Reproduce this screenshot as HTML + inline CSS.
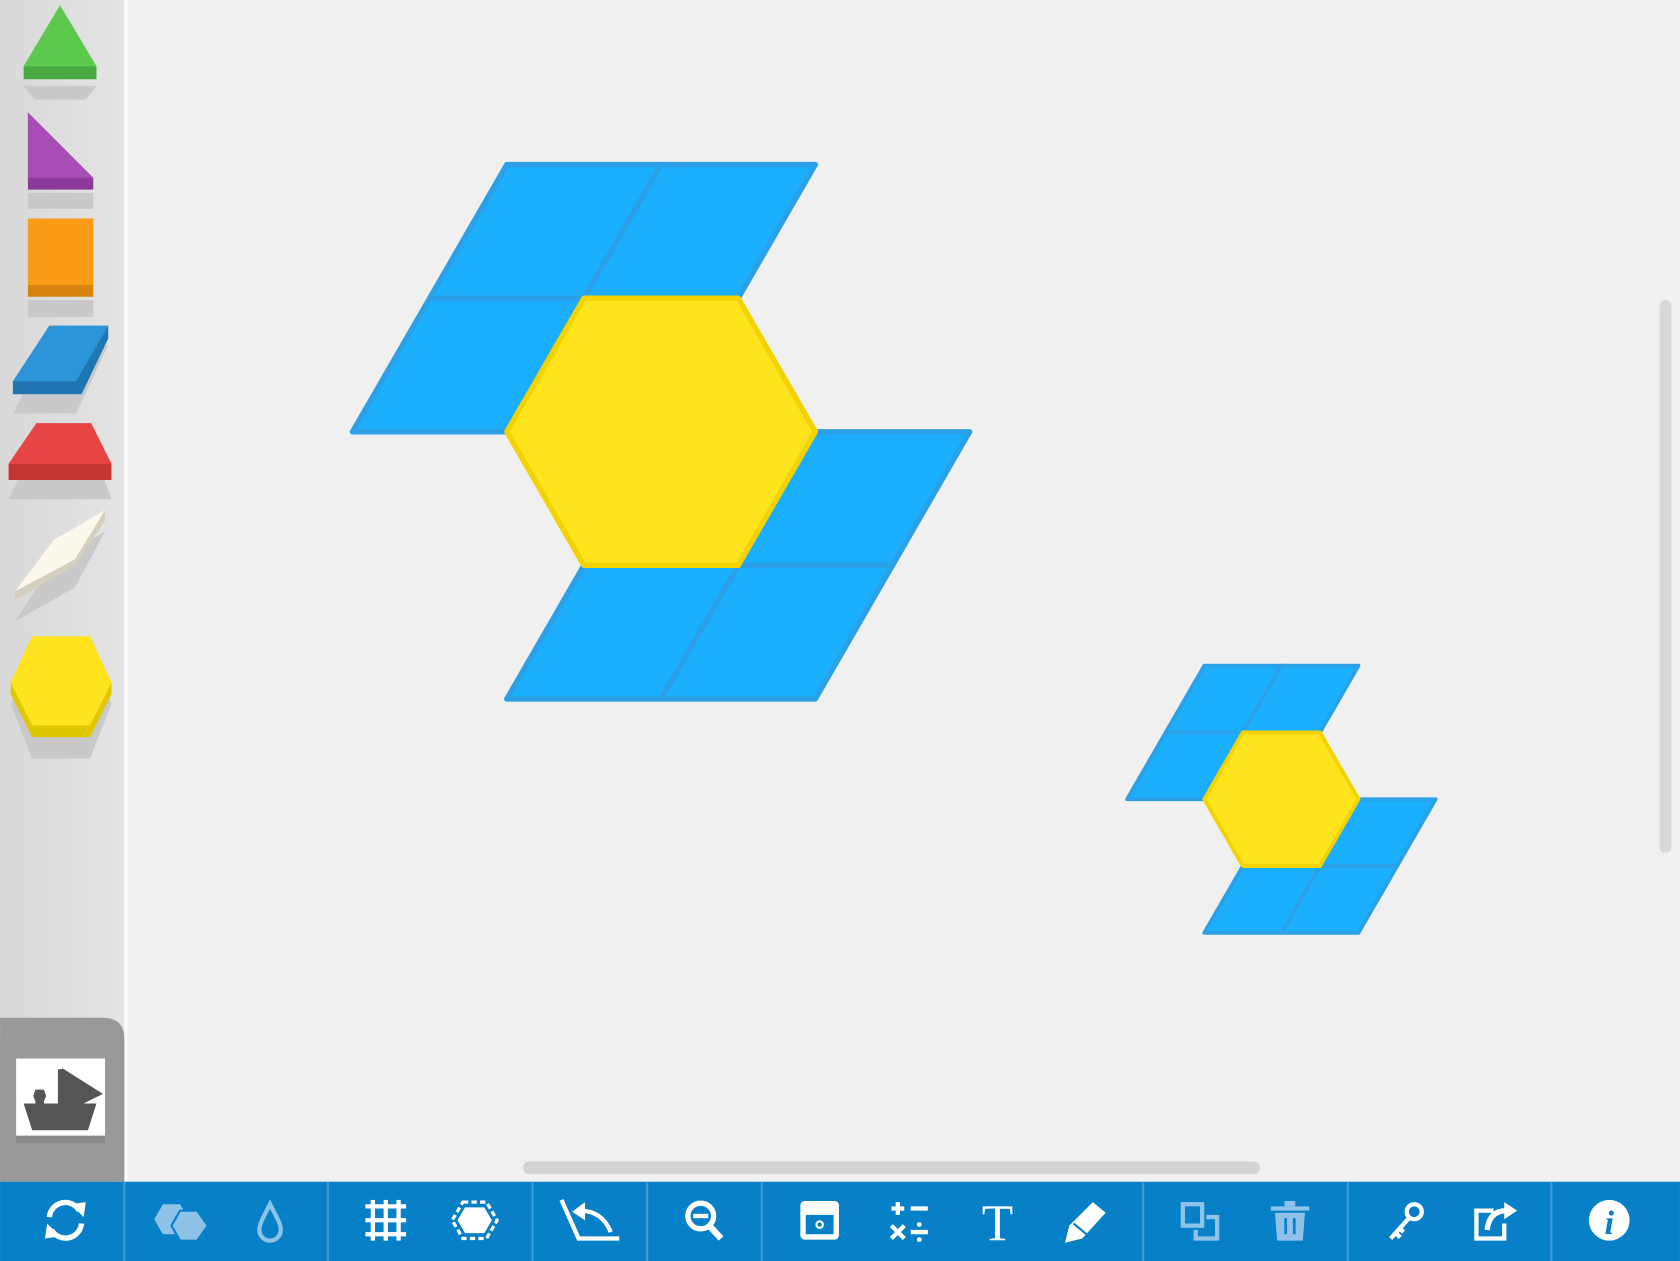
<!DOCTYPE html>
<html><head><meta charset="utf-8"><style>
html,body{margin:0;padding:0;background:#f0f0f0;overflow:hidden}
svg{display:block}
</style></head><body>
<svg width="1680" height="1261" viewBox="0 0 1568 1177" xmlns="http://www.w3.org/2000/svg">
<defs>
<linearGradient id="sb" x1="0" x2="1"><stop offset="0" stop-color="#d8d8d8"/><stop offset="1" stop-color="#e4e4e4"/></linearGradient>
</defs>
<rect width="1568" height="1177" fill="#f0f0f0"/>
<!-- sidebar -->
<rect x="0" y="0" width="116" height="1103" fill="url(#sb)"/>
<rect x="116" y="0" width="3" height="1103" fill="#fafafa"/>
<!-- shadows -->
<g fill="#c9c9c9">
<polygon points="22,80 90,80 80,93 32,93"/>
<polygon points="26,180 87,180 87,195 26,195"/>
<rect x="26" y="280" width="61" height="16"/>
<polygon points="46,322 101,322 71,386 12,386"/>
<polygon points="34,413 85,413 104,466 8,466"/>
<polygon points="50,524 98,496 70,548 14,580"/>
<polygon points="30,614 84,614 104,657 84,708 30,708 10,657"/>
</g>
<!-- green triangle -->
<polygon points="56,5 90,62 90,74 22,74 22,62" fill="#4aa842"/>
<polygon points="56,5 90,62 22,62" fill="#5cc94e"/>
<!-- purple -->
<polygon points="26,105 87,166 87,177 26,177" fill="#8a3a98"/>
<polygon points="26,105 87,166 26,166" fill="#ab4db8"/>
<!-- orange -->
<rect x="26" y="204" width="61" height="73" fill="#d6840f"/>
<rect x="26" y="204" width="61" height="62" fill="#fb9c16"/>
<!-- blue parallelogram -->
<polygon points="46,304 101,304 101,316 76,368 12,368 12,356" fill="#1f76b0"/>
<polygon points="46,304 101,304 71,356 12,356" fill="#2b95d8"/>
<!-- red trapezoid -->
<polygon points="34,395 85,395 104,433 104,448 8,448 8,433" fill="#c53535"/>
<polygon points="34,395 85,395 104,433 8,433" fill="#e84545"/>
<!-- cream rhombus -->
<polygon points="50,504 98,476 98,486 70,528 14,560 14,552" fill="#d5cfbf"/>
<polygon points="50,504 98,476 70,522 14,552" fill="#fdf8ec"/>
<!-- yellow hex -->
<polygon points="30,594 84,594 104,637 104,648 84,688 30,688 10,648 10,637" fill="#e0c800"/>
<polygon points="30,594 84,594 104,637 84,677 30,677 10,637" fill="#ffe31c"/>
<!-- stamp box -->
<path d="M0,950 H96 Q116,950 116,970 V1103 H0 Z" fill="#999"/>
<rect x="15" y="1058" width="83" height="9" fill="#888"/>
<rect x="15" y="988" width="83" height="72" fill="#fff"/>
<rect x="54" y="998" width="6" height="36" fill="#555"/>
<polygon points="58,997 96,1021 58,1040" fill="#555"/>
<path d="M33,1017 h8 l2,6 l-2,5 v8 h-8 v-8 l-2,-5 z" fill="#555"/>
<path d="M22,1030 H90 L82,1055 H30 Z" fill="#555"/>
<!-- scrollbars -->
<rect x="488" y="1084" width="688" height="12" rx="6" fill="#d3d3d3"/>
<rect x="1549" y="280" width="11" height="516" rx="5.5" fill="#d8d8d8"/>
<!-- big shape -->
<g fill="#1aaefc" stroke="#2ba0e6" stroke-width="5" stroke-linejoin="round">
<polygon points="473,153.6 617,153.6 545,278.3 401,278.3"/>
<polygon points="617,153.6 761,153.6 689,278.3 545,278.3"/>
<polygon points="401,278.3 545,278.3 473,403 329,403"/>
<polygon points="761,652.4 617,652.4 689,527.7 833,527.7"/>
<polygon points="617,652.4 473,652.4 545,527.7 689,527.7"/>
<polygon points="833,527.7 689,527.7 761,403 905,403"/>
</g>
<polygon points="473,403 545,278.3 689,278.3 761,403 689,527.7 545,527.7" fill="#ffe31c" stroke="#f2d300" stroke-width="5" stroke-linejoin="round"/>
<!-- small shape -->
<g fill="#1aaefc" stroke="#2ba0e6" stroke-width="3.5" stroke-linejoin="round">
<polygon points="1124,621.3 1196,621.3 1160,683.6 1088,683.6"/>
<polygon points="1196,621.3 1268,621.3 1232,683.6 1160,683.6"/>
<polygon points="1088,683.6 1160,683.6 1124,746 1052,746"/>
<polygon points="1304,808.4 1232,808.4 1268,746 1340,746"/>
<polygon points="1268,870.7 1196,870.7 1232,808.4 1304,808.4"/>
<polygon points="1196,870.7 1124,870.7 1160,808.4 1232,808.4"/>
</g>
<polygon points="1124,746 1160,683.6 1232,683.6 1268,746 1232,808.4 1160,808.4" fill="#ffe31c" stroke="#f2d300" stroke-width="3.5" stroke-linejoin="round"/>
<!-- toolbar -->
<rect x="0" y="1103" width="1568" height="74" fill="#0780c8"/>
<g fill="#3e9ad8">
<rect x="115" y="1103" width="2" height="74"/>
<rect x="305" y="1103" width="2" height="74"/>
<rect x="496" y="1103" width="2" height="74"/>
<rect x="603" y="1103" width="2" height="74"/>
<rect x="710" y="1103" width="2" height="74"/>
<rect x="1066" y="1103" width="2" height="74"/>
<rect x="1257" y="1103" width="2" height="74"/>
<rect x="1447" y="1103" width="2" height="74"/>
</g>
<!-- icons -->
<g fill="none" stroke="#fff" stroke-width="5">
<path d="M46,1136 A15,15 0 0 1 74,1130"/>
<path d="M76,1142 A15,15 0 0 1 48,1148"/>
</g>
<polygon points="66,1124 80,1122 78,1136" fill="#fff"/>
<polygon points="56,1154 42,1156 44,1142" fill="#fff"/>
<polygon points="152,1124 168,1124 176,1138 168,1152 152,1152 144,1138" fill="#8fc2e8"/>
<polygon points="168,1130 184,1130 194,1144 184,1158 168,1158 160,1144" fill="#8fc2e8" stroke="#0780c8" stroke-width="2"/>
<path d="M252,1124 C258,1136 262,1142 262,1148 A10,10 0 0 1 242,1148 C242,1142 246,1136 252,1124 Z" fill="none" stroke="#8fc2e8" stroke-width="4"/>
<g stroke="#fff" stroke-width="4">
<line x1="348" y1="1120" x2="348" y2="1158"/><line x1="360" y1="1120" x2="360" y2="1158"/><line x1="372" y1="1120" x2="372" y2="1158"/>
<line x1="341" y1="1126" x2="379" y2="1126"/><line x1="341" y1="1139" x2="379" y2="1139"/><line x1="341" y1="1152" x2="379" y2="1152"/>
</g>
<polygon points="432,1122 454,1122 464,1139 454,1156 432,1156 422,1139" fill="none" stroke="#fff" stroke-width="3" stroke-dasharray="5,3"/>
<polygon points="434,1127 452,1127 459,1139 452,1151 434,1151 427,1139" fill="#fff"/>
<path d="M524,1120 L540,1156 H578" fill="none" stroke="#fff" stroke-width="4"/>
<path d="M541,1130 Q562,1130 570,1150" fill="none" stroke="#fff" stroke-width="4"/>
<polygon points="534,1131 546,1122 546,1139" fill="#fff"/>
<circle cx="654" cy="1135" r="12" fill="none" stroke="#fff" stroke-width="5"/>
<line x1="662" y1="1144" x2="673" y2="1156" stroke="#fff" stroke-width="6"/>
<line x1="647" y1="1135" x2="661" y2="1135" stroke="#fff" stroke-width="4"/>
<rect x="747" y="1121" width="36" height="36" rx="4" fill="#fff"/>
<rect x="752" y="1134" width="26" height="18" fill="#0780c8"/>
<circle cx="765" cy="1143" r="3" fill="none" stroke="#fff" stroke-width="2"/>
<g stroke="#fff" stroke-width="4">
<line x1="832" y1="1128" x2="844" y2="1128"/><line x1="838" y1="1122" x2="838" y2="1134"/>
<line x1="850" y1="1128" x2="866" y2="1128"/>
<line x1="832" y1="1144" x2="844" y2="1156"/><line x1="844" y1="1144" x2="832" y2="1156"/>
<line x1="850" y1="1150" x2="866" y2="1150"/>
</g>
<circle cx="858" cy="1143" r="2.2" fill="#fff"/><circle cx="858" cy="1157" r="2.2" fill="#fff"/>
<text x="931" y="1158" font-family="Liberation Serif, serif" font-size="48" fill="#fff" text-anchor="middle">T</text>
<polygon points="1020,1122 1032,1132 1010,1156 994,1160 998,1144" fill="#fff"/>
<line x1="1002" y1="1142" x2="1014" y2="1152" stroke="#0780c8" stroke-width="2"/>
<g fill="none" stroke="#8fc2e8" stroke-width="4">
<rect x="1104" y="1124" width="18" height="20"/>
<path d="M1126,1136 H1136 V1156 H1116 V1148"/>
</g>
<g fill="#8fc2e8">
<rect x="1186" y="1126" width="36" height="4"/><rect x="1199" y="1121" width="10" height="5"/>
<path d="M1190,1132 H1218 L1216,1158 H1192 Z"/>
</g>
<g stroke="#0780c8" stroke-width="2.5"><line x1="1200" y1="1137" x2="1200" y2="1152"/><line x1="1208" y1="1137" x2="1208" y2="1152"/></g>
<circle cx="1320" cy="1131" r="7" fill="none" stroke="#fff" stroke-width="4"/>
<path d="M1315,1137 L1298,1156 M1302,1150 L1307,1155 M1306,1146 L1310,1150" stroke="#fff" stroke-width="4" fill="none"/>
<path d="M1394,1130 H1378 V1156 H1404 V1142" fill="none" stroke="#fff" stroke-width="4"/>
<path d="M1388,1148 Q1390,1130 1406,1130" fill="none" stroke="#fff" stroke-width="5"/>
<polygon points="1404,1122 1416,1130 1404,1138" fill="#fff"/>
<circle cx="1502" cy="1139" r="19" fill="#fff"/>
<text x="1502" y="1152" font-family="Liberation Serif, serif" font-style="italic" font-weight="bold" font-size="32" fill="#0780c8" text-anchor="middle">i</text>
</svg>
</body></html>
